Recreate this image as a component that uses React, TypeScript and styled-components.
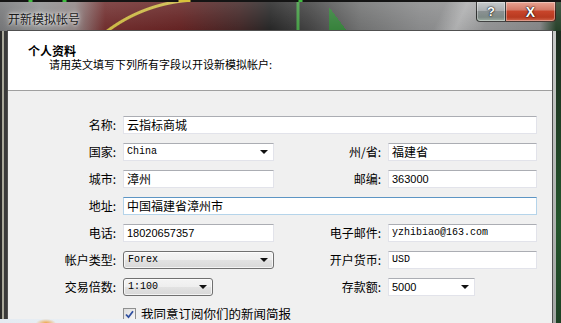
import styled, { createGlobalStyle } from 'styled-components';

const GlobalStyle = createGlobalStyle`
  html, body {
    margin: 0;
    padding: 0;
  }
  body {
    width: 561px;
    height: 323px;
    overflow: hidden;
    background: #1b1b1b;
    font-family: "Noto Sans CJK SC", "Microsoft YaHei", sans-serif;
  }
`;

// Aero 玻璃窗框：透出的行情图（暗红、黄线、绿线）+ 半透明灰层。
// 各层用 background-size/position 限定范围，黄线只取圆弧左上段。
const Window = styled.div`
  position: relative;
  width: 561px;
  height: 323px;
  overflow: hidden;
  display: flex;
  flex-direction: column;
  background:
    linear-gradient(180deg, rgba(255, 255, 255, 0.18) 0, rgba(255, 255, 255, 0.04) 30px, rgba(0, 0, 0, 0) 31px) 0 0 / 561px 31px no-repeat,
    linear-gradient(115deg, transparent 405px, rgba(255, 255, 255, 0.28) 425px, transparent 450px) 0 0 / 561px 31px no-repeat,
    radial-gradient(circle at 200px 154px, transparent 152px, #c9b53c 153px, #c9b53c 155px, transparent 156px) 0 0 / 200px 31px no-repeat,
    linear-gradient(90deg, transparent 296px, #3f9a3f 297px, #3f9a3f 299px, transparent 300px) 0 0 / 561px 31px no-repeat,
    linear-gradient(to bottom left, transparent 50%, #2f7d34 50%) 329px 7px / 18px 24px no-repeat,
    linear-gradient(90deg, #2c2c2c 0, #2c2c2c 2px, #a9a89a 2px, #a9a89a 4px, #3a3a3a 4px, #3a3a3a 7px) 0 31px / 7px 100% no-repeat,
    linear-gradient(180deg, #c8cac8 0, #9fa2a0 100%) 553px 31px / 3px 100% no-repeat,
    linear-gradient(180deg, #1d2b1f 0, #24552c 60%, #1c3a22 100%) 556px 31px / 5px 100% no-repeat,
    linear-gradient(
      90deg,
      #6f7072 0,
      #8b8c8d 40px,
      #8a7f7f 75px,
      #6a2525 105px,
      #5e1a1a 180px,
      #3a1e1e 240px,
      #1e1e1e 270px,
      #3b3b3b 310px,
      #6a6b6b 360px,
      #838485 420px,
      #8e8f90 480px,
      #7e7f80 540px,
      #1f3a22 556px,
      #1f3a22 561px
    );
`;

const TopEdge = styled.div`
  height: 2px;
  background:
    linear-gradient(90deg, transparent 28px, #3fbf3f 29px, #3fbf3f 32px, transparent 33px,
      transparent 62px, #3fbf3f 63px, #3fbf3f 66px, transparent 67px,
      transparent 178px, #d8c23a 179px, #d8c23a 190px, transparent 191px,
      transparent 298px, #3fbf3f 299px, #3fbf3f 302px, transparent 303px),
    #141414;
`;

const TitleBar = styled.div`
  display: flex;
  align-items: flex-start;
  height: 28px;
  padding-right: 5px;
`;

const Title = styled.div`
  padding: 9px 0 0 8px;
  font-size: 12px;
  line-height: 16px;
  color: #1a1a1a;
  text-shadow: 0 0 6px rgba(255, 255, 255, 0.9), 0 0 3px rgba(255, 255, 255, 0.8);
`;

const CaptionButtons = styled.div`
  display: flex;
  margin-left: auto;
`;

const CaptionButton = styled.div<{ $close?: boolean }>`
  display: flex;
  align-items: center;
  justify-content: center;
  width: ${({ $close }) => ($close ? '49px' : '28px')};
  height: 19px;
  border: 1px solid rgba(20, 20, 20, 0.75);
  border-top: none;
  border-left-width: ${({ $close }) => ($close ? '0' : '1px')};
  border-radius: ${({ $close }) => ($close ? '0 0 4px 0' : '0 0 0 4px')};
  box-shadow: inset 0 0 0 1px rgba(255, 255, 255, 0.35);
  background: ${({ $close }) =>
    $close
      ? 'linear-gradient(180deg, #e8a493 0, #d37b68 40%, #c7442a 50%, #b83a20 80%, #d2664c 100%)'
      : 'linear-gradient(180deg, #c8cbcc 0, #a9aeb0 45%, #8a9192 50%, #7e8a86 80%, #9fb0a4 100%)'};
  color: #fff;
  font-family: "Liberation Sans", Arial, sans-serif;
  font-weight: bold;
  font-size: ${({ $close }) => ($close ? '14px' : '13px')};
  text-shadow: 0 0 2px rgba(0, 0, 0, 0.9), 0 0 1px #000;
`;

const Client = styled.div`
  flex: 1;
  margin: 0 8px 0 7px;
  border: 1px solid rgba(40, 40, 40, 0.8);
  border-bottom: none;
  background: #f0f0f0;
  display: flex;
  flex-direction: column;
`;

const Header = styled.div`
  height: 60px;
  padding: 14px 0 0 20px;
  box-sizing: border-box;
  background: #fff;
  border-bottom: 1px solid #a0a0a0;
  color: #000;
`;

const HeaderTitle = styled.div`
  font-size: 12px;
  font-weight: bold;
  line-height: 12px;
`;

const HeaderText = styled.div`
  padding-left: 21px;
  font-size: 11px;
  line-height: 14px;
`;

const Form = styled.div`
  display: grid;
  grid-template-columns: 115px 151px 114px 149px;
  grid-auto-rows: 18px;
  row-gap: 9px;
  padding-top: 25px;
`;

const Label = styled.div`
  text-align: right;
  padding-right: 7px;
  font-size: 12px;
  line-height: 18px;
  color: #000;
  white-space: nowrap;
`;

const Box = styled.div<{ $span?: boolean; $focused?: boolean; $width?: number }>`
  grid-column: ${({ $span }) => ($span ? 'span 3' : 'auto')};
  width: ${({ $width }) => ($width ? `${$width}px` : 'auto')};
  box-sizing: border-box;
  height: 18px;
  display: flex;
  align-items: center;
  padding: 0 5px 0 3px;
  background: #fff;
  border: 1px solid ${({ $focused }) => ($focused ? '#b5d4ea' : '#e2e3ea')};
  border-top-color: ${({ $focused }) => ($focused ? '#5d95c4' : '#abadb3')};
  color: #000;
`;

const DropButton = styled.div<{ $width?: number }>`
  width: ${({ $width }) => ($width ? `${$width}px` : 'auto')};
  box-sizing: border-box;
  height: 18px;
  display: flex;
  align-items: center;
  padding: 0 5px 0 4px;
  border: 1px solid #707070;
  border-radius: 3px;
  box-shadow: inset 0 0 0 1px rgba(255, 255, 255, 0.7);
  background: linear-gradient(180deg, #f4f4f4 0, #eeeeee 50%, #e2e2e2 51%, #d8d8d8 100%);
  color: #000;
`;

const Value = styled.span<{ $font?: 'cjk' | 'mono' | 'sans' }>`
  flex: 1;
  white-space: nowrap;
  overflow: hidden;
  font-family: ${({ $font }) =>
    $font === 'mono'
      ? '"Liberation Mono", "Courier New", monospace'
      : $font === 'sans'
        ? '"Liberation Sans", Arial, sans-serif'
        : '"Noto Sans CJK SC", sans-serif'};
  font-size: ${({ $font }) => ($font === 'mono' ? '10px' : $font === 'sans' ? '11px' : '12px')};
  line-height: 16px;
`;

const Arrow = styled.span`
  width: 0;
  height: 0;
  border-left: 4px solid transparent;
  border-right: 4px solid transparent;
  border-top: 4px solid #111;
`;

const CheckRow = styled.div`
  grid-column: 2 / span 3;
  display: flex;
  align-items: center;
  gap: 5px;
  font-size: 12.5px;
  line-height: 18px;
  color: #000;
`;

const CheckBox = styled.span`
  width: 13px;
  height: 13px;
  box-sizing: border-box;
  border: 1px solid #8e8f8f;
  background: linear-gradient(135deg, #dcdcdc 0, #f8f8f8 100%);
  display: flex;
  align-items: center;
  justify-content: center;
`;

// 截图底部露出的下层窗口一角
const BottomPeek = styled.div`
  position: absolute;
  left: 0;
  bottom: 0;
  width: 210px;
  height: 4px;
  background:
    radial-gradient(ellipse 10px 4px at 46px 4px, #f0a64a 0, rgba(240, 166, 74, 0) 100%),
    linear-gradient(90deg, #e4ebf2 0, #eef2f6 70%, rgba(240, 240, 240, 0) 100%);
`;

type Font = 'cjk' | 'mono' | 'sans';

type Field =
  | { kind: 'text'; value: string; font?: Font; span?: boolean; focused?: boolean }
  | { kind: 'combo'; value: string; font?: Font; width?: number }
  | { kind: 'drop'; value: string; font?: Font; width?: number };

function Input({ field }: { field: Field }) {
  if (field.kind === 'drop') {
    return (
      <DropButton $width={field.width}>
        <Value $font={field.font}>{field.value}</Value>
        <Arrow />
      </DropButton>
    );
  }
  if (field.kind === 'combo') {
    return (
      <Box $width={field.width}>
        <Value $font={field.font}>{field.value}</Value>
        <Arrow />
      </Box>
    );
  }
  return (
    <Box $span={field.span} $focused={field.focused}>
      <Value $font={field.font}>{field.value}</Value>
    </Box>
  );
}

export default function App() {
  return (
    <>
      <GlobalStyle />
      <Window>
        <TopEdge />
        <TitleBar>
          <Title>开新模拟帐号</Title>
          <CaptionButtons>
            <CaptionButton>?</CaptionButton>
            <CaptionButton $close>X</CaptionButton>
          </CaptionButtons>
        </TitleBar>
        <Client>
          <Header>
            <HeaderTitle>个人资料</HeaderTitle>
            <HeaderText>请用英文填写下列所有字段以开设新模拟帐户:</HeaderText>
          </Header>
          <Form>
            <Label>名称:</Label>
            <Input field={{ kind: 'text', value: '云指标商城', span: true }} />

            <Label>国家:</Label>
            <Input field={{ kind: 'combo', value: 'China', font: 'mono' }} />
            <Label>州/省:</Label>
            <Input field={{ kind: 'text', value: '福建省' }} />

            <Label>城市:</Label>
            <Input field={{ kind: 'text', value: '漳州' }} />
            <Label>邮编:</Label>
            <Input field={{ kind: 'text', value: '363000', font: 'sans' }} />

            <Label>地址:</Label>
            <Input field={{ kind: 'text', value: '中国福建省漳州市', span: true, focused: true }} />

            <Label>电话:</Label>
            <Input field={{ kind: 'text', value: '18020657357', font: 'sans' }} />
            <Label>电子邮件:</Label>
            <Input field={{ kind: 'text', value: 'yzhibiao@163.com', font: 'mono' }} />

            <Label>帐户类型:</Label>
            <Input field={{ kind: 'drop', value: 'Forex', font: 'mono' }} />
            <Label>开户货币:</Label>
            <Input field={{ kind: 'text', value: 'USD', font: 'mono' }} />

            <Label>交易倍数:</Label>
            <Input field={{ kind: 'drop', value: '1:100', font: 'mono', width: 90 }} />
            <Label>存款额:</Label>
            <Input field={{ kind: 'combo', value: '5000', font: 'sans', width: 87 }} />

            <CheckRow>
              <CheckBox>
                <svg width="9" height="9" viewBox="0 0 9 9">
                  <path d="M1 4.5 L3.5 7.2 L8 1.2" fill="none" stroke="#2f4fa0" strokeWidth="1.8" />
                </svg>
              </CheckBox>
              我同意订阅你们的新闻简报
            </CheckRow>
          </Form>
        </Client>
        <BottomPeek />
      </Window>
    </>
  );
}
